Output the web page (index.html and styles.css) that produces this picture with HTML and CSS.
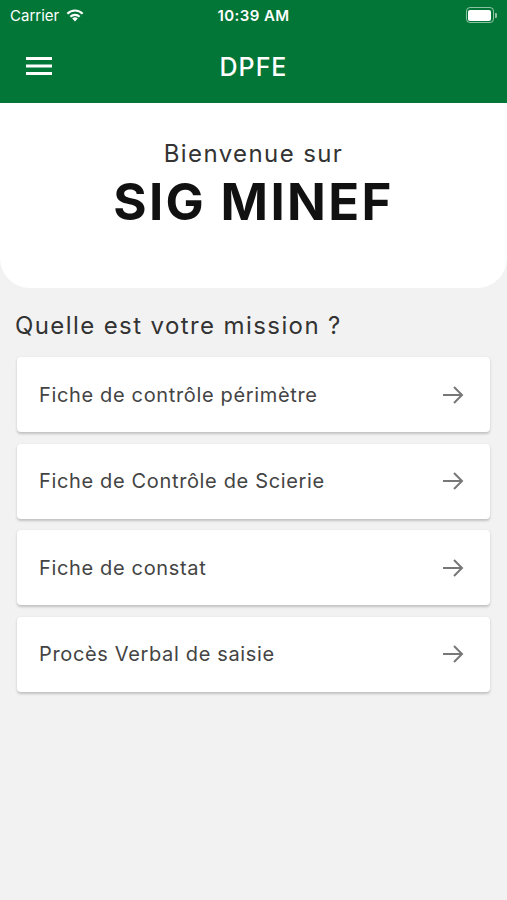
FILE: index.html
```html
<!DOCTYPE html>
<html lang="fr">
<head>
  <meta charset="UTF-8">
  <meta name="viewport" content="width=device-width, initial-scale=1.0">
  <title>DPFE - SIG MINEF</title>
  <link rel="stylesheet" href="styles.css">
</head>
<body>
  <div class="header">
    <div class="status-bar">
      <div class="status-left">
        <span>Carrier</span>
        <svg class="wifi" width="20" height="14" viewBox="0 0 20 14">
          <path d="M10 13.5 L7.2 10.6 A4 4 0 0 1 12.8 10.6 Z" fill="#fff"/>
          <path d="M4.6 8 A7.6 7.6 0 0 1 15.4 8 L13.9 9.5 A5.5 5.5 0 0 0 6.1 9.5 Z" fill="#fff"/>
          <path d="M1.6 5 A11.8 11.8 0 0 1 18.4 5 L16.9 6.5 A9.7 9.7 0 0 0 3.1 6.5 Z" fill="#fff"/>
        </svg>
      </div>
      <div class="status-time">10:39 AM</div>
      <div class="status-right">
        <div class="battery"><div class="battery-level"></div></div>
        <div class="battery-tip"></div>
      </div>
    </div>
    <div class="app-bar">
      <div class="menu-btn">
        <svg width="26" height="20" viewBox="0 0 26 20">
          <rect x="0" y="1" width="26" height="3" fill="#fff"/>
          <rect x="0" y="8.5" width="26" height="3" fill="#fff"/>
          <rect x="0" y="16" width="26" height="3" fill="#fff"/>
        </svg>
      </div>
      <h1>DPFE</h1>
    </div>
  </div>

  <div class="welcome">
    <div class="welcome-sub">Bienvenue sur</div>
    <div class="welcome-title">SIG MINEF</div>
  </div>

  <div class="main-content">
    <h2>Quelle est votre mission ?</h2>
    <div class="mission-list">
      <a class="mission-card" href="#">
        <span>Fiche de contrôle périmètre</span>
        <svg class="arrow" width="24" height="24" viewBox="0 0 24 24"><path d="M2 12 H21 M13 4 L21 12 L13 20" fill="none" stroke="#777" stroke-width="2"/></svg>
      </a>
      <a class="mission-card" href="#">
        <span>Fiche de Contrôle de Scierie</span>
        <svg class="arrow" width="24" height="24" viewBox="0 0 24 24"><path d="M2 12 H21 M13 4 L21 12 L13 20" fill="none" stroke="#777" stroke-width="2"/></svg>
      </a>
      <a class="mission-card" href="#">
        <span>Fiche de constat</span>
        <svg class="arrow" width="24" height="24" viewBox="0 0 24 24"><path d="M2 12 H21 M13 4 L21 12 L13 20" fill="none" stroke="#777" stroke-width="2"/></svg>
      </a>
      <a class="mission-card" href="#">
        <span>Procès Verbal de saisie</span>
        <svg class="arrow" width="24" height="24" viewBox="0 0 24 24"><path d="M2 12 H21 M13 4 L21 12 L13 20" fill="none" stroke="#777" stroke-width="2"/></svg>
      </a>
    </div>
  </div>
</body>
</html>
```

FILE: styles.css
```css
body {
  font-family: Inter, 'Noto Sans', sans-serif;
  margin: 0;
  padding: 0;
  background: #f2f2f2;
  color: #333;
  min-height: 900px;
}

.header {
  background: #027636;
  color: #fff;
  height: 103px;
}

.status-bar {
  height: 30px;
  display: flex;
  align-items: center;
  justify-content: space-between;
  padding: 0 10px;
  font-size: 15px;
}

.status-left {
  display: flex;
  align-items: center;
  gap: 6px;
  width: 120px;
}

.status-time {
  font-weight: 600;
  font-size: 15px;
  letter-spacing: 0.4px;
}

.status-right {
  display: flex;
  align-items: center;
  justify-content: flex-end;
  width: 120px;
}

.battery {
  width: 23px;
  height: 11px;
  border: 1.5px solid rgba(255,255,255,0.55);
  border-radius: 4px;
  padding: 1.5px;
  box-sizing: content-box;
}

.battery-level {
  width: 100%;
  height: 100%;
  background: #fff;
  border-radius: 2px;
}

.battery-tip {
  width: 2px;
  height: 5px;
  margin-left: 1px;
  background: rgba(255,255,255,0.55);
  border-radius: 0 1px 1px 0;
}

.app-bar {
  height: 73px;
  display: flex;
  align-items: center;
  position: relative;
}

.menu-btn {
  position: absolute;
  left: 26px;
  top: 26px;
  height: 20px;
}

.app-bar h1 {
  margin: 0 auto;
  font-size: 25px;
  font-weight: 500;
  letter-spacing: 1px;
}

.welcome {
  background: #fff;
  height: 185px;
  border-radius: 0 0 30px 30px;
  text-align: center;
  box-sizing: border-box;
  padding-top: 35px;
}

.welcome-sub {
  font-size: 24px;
  color: #333;
  line-height: 32px;
  letter-spacing: 1.4px;
}

.welcome-title {
  font-size: 51px;
  font-weight: bold;
  color: #111;
  letter-spacing: 2.3px;
  line-height: 64px;
}

.main-content {
  padding: 0 17px;
}

.main-content h2 {
  font-size: 24px;
  font-weight: 400;
  color: #333;
  margin: 22px 0 15px -2px;
  line-height: 32px;
  letter-spacing: 1.4px;
}

.mission-list {
  display: flex;
  flex-direction: column;
  gap: 11.5px;
}

.mission-card {
  background: #fff;
  height: 75px;
  border-radius: 4px;
  box-shadow: 0 1.5px 2.5px rgba(0,0,0,0.2);
  display: flex;
  align-items: center;
  justify-content: space-between;
  padding: 0 25px 0 22px;
  text-decoration: none;
  color: #444;
  font-size: 20px;
  letter-spacing: 0.65px;
}

.arrow {
  display: block;
}
```
